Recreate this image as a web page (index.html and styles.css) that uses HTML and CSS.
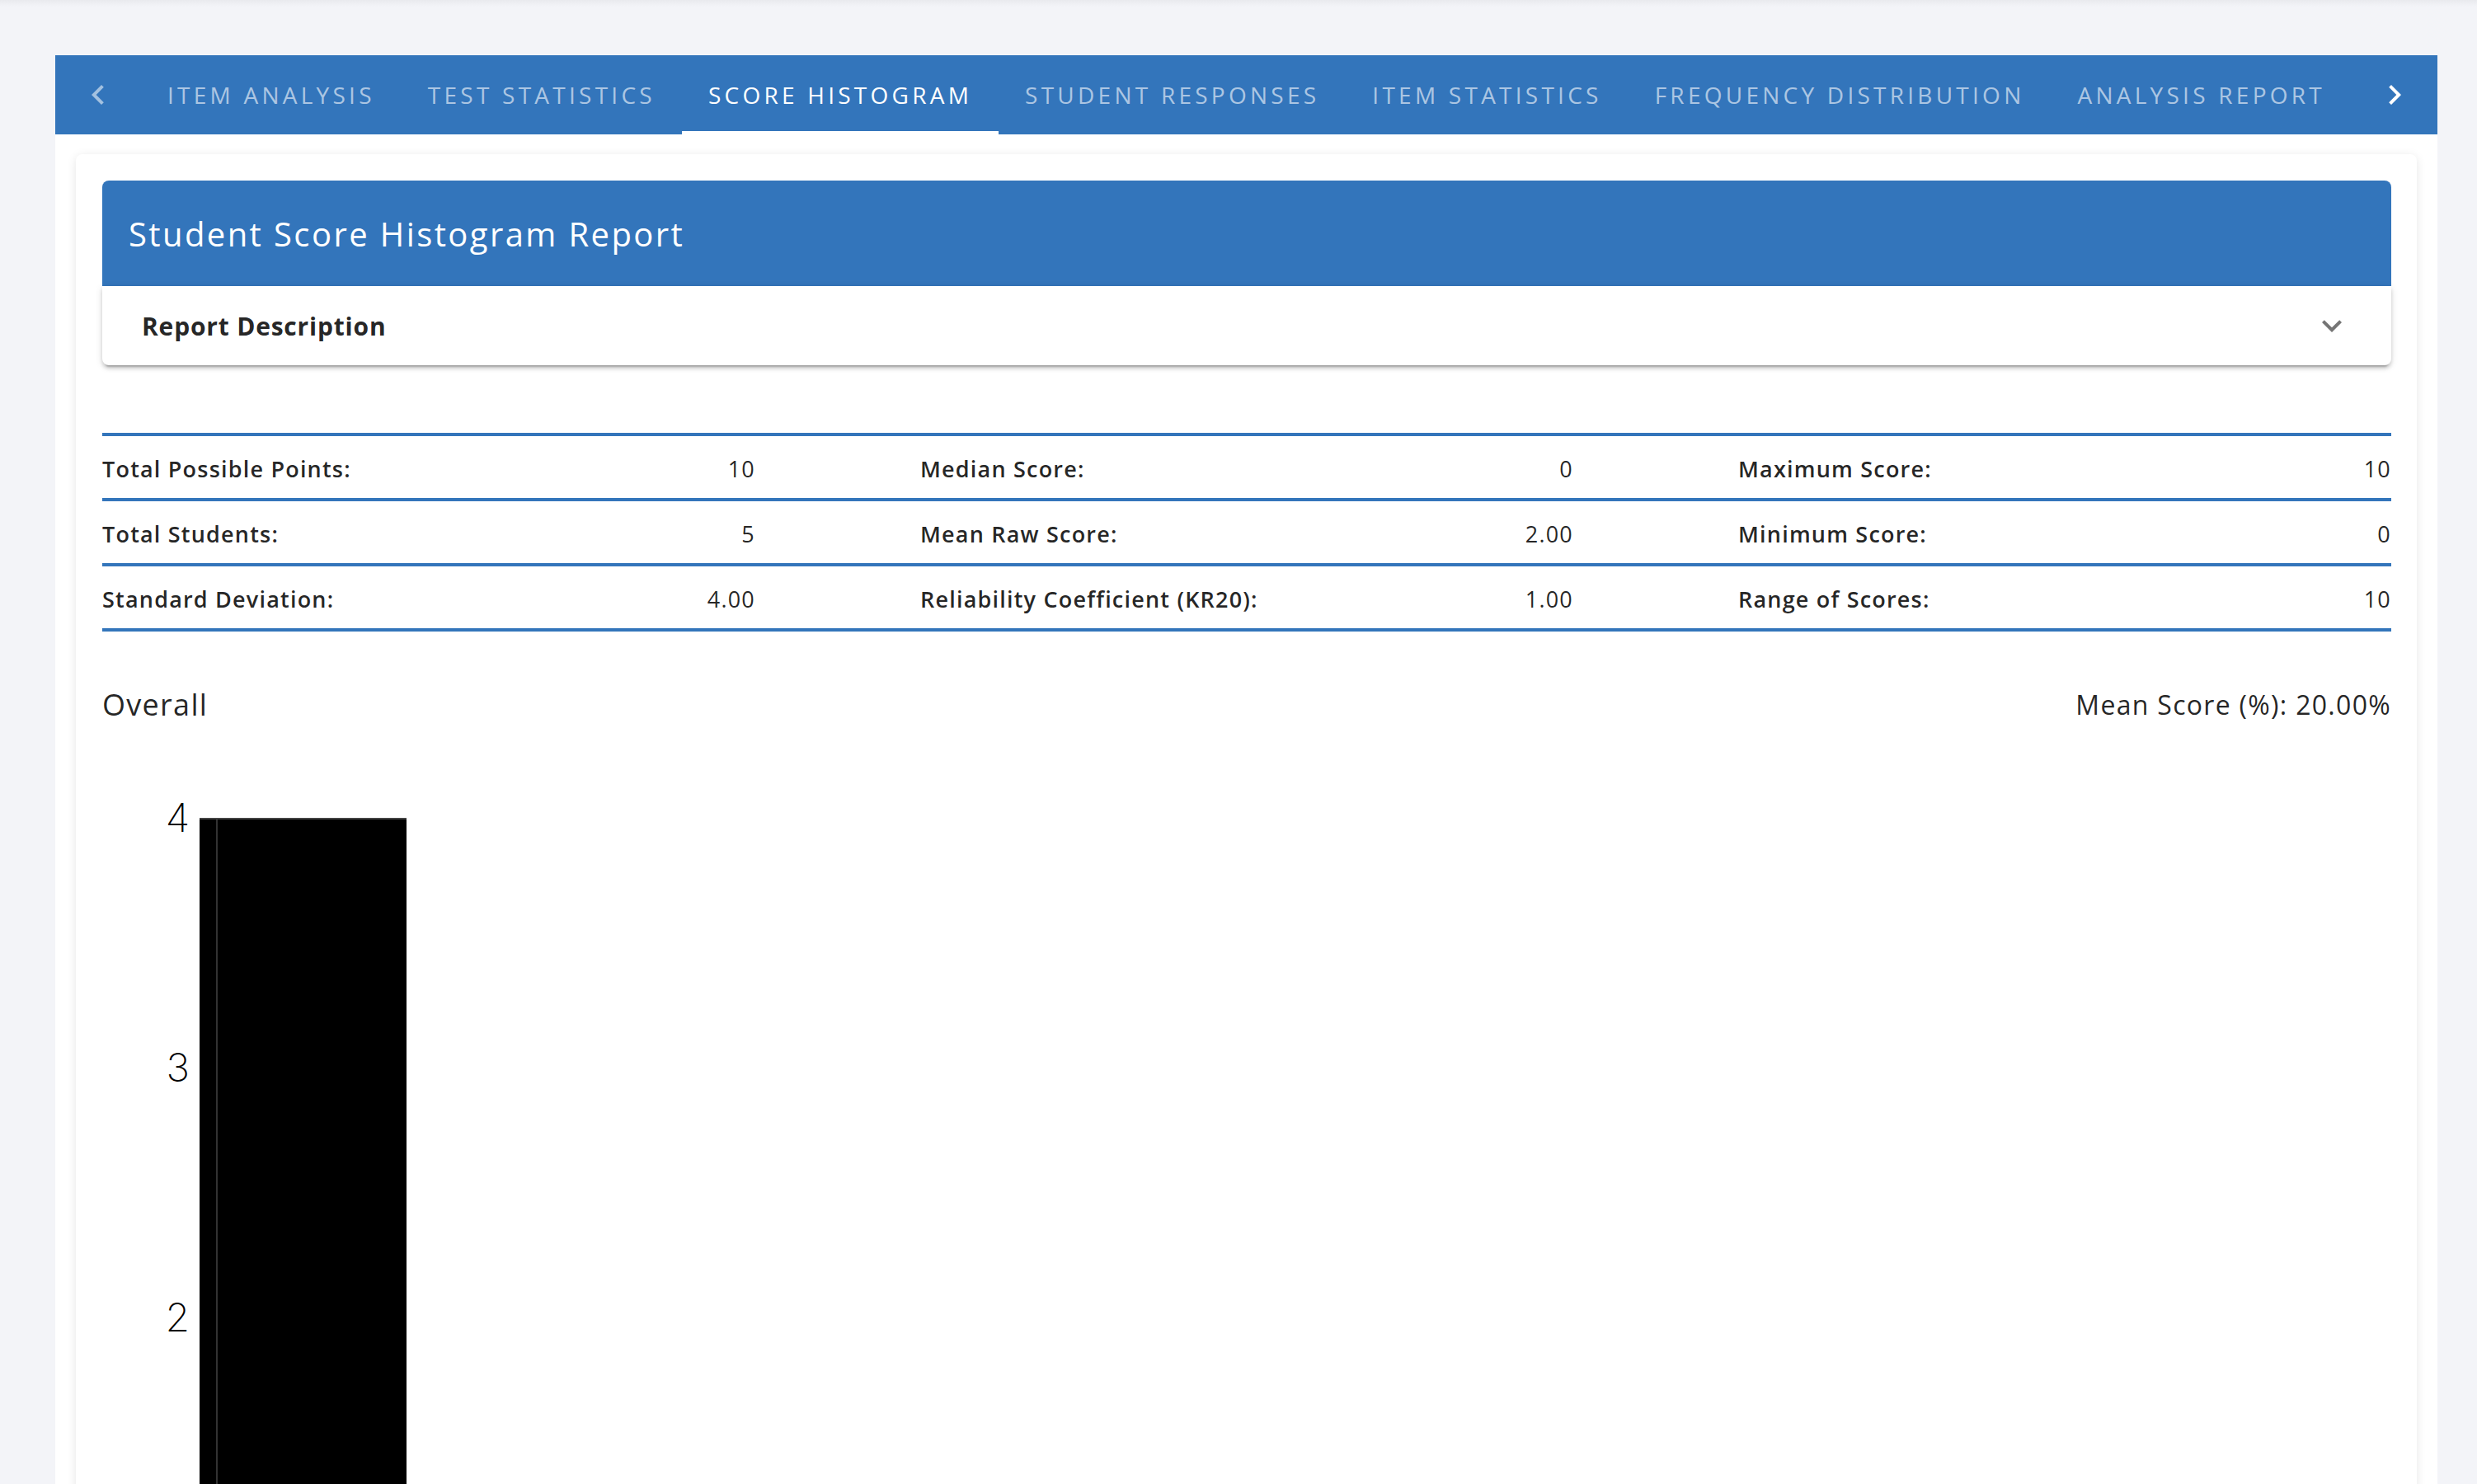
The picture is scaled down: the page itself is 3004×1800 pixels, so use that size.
FILE: index.html
```html
<!DOCTYPE html>
<html lang="en">
<head>
  <meta charset="UTF-8">
  <meta name="viewport" content="width=device-width, initial-scale=1.0">
  <title>Score Histogram</title>
  <link rel="stylesheet" href="styles.css">
</head>
<body>

<div class="top-shade"></div>

<div class="window">
  <div class="tabs">
    <div class="tabs-arrow disabled">
      <svg viewBox="0 0 24 24"><path d="M15.41,16.58L10.83,12L15.41,7.41L14,6L8,12L14,18L15.41,16.58Z"/></svg>
    </div>
    <div class="tab">Item Analysis</div>
    <div class="tab">Test Statistics</div>
    <div class="tab active">Score Histogram</div>
    <div class="tab">Student Responses</div>
    <div class="tab">Item Statistics</div>
    <div class="tab">Frequency Distribution</div>
    <div class="tab">Analysis Report</div>
    <div class="tabs-arrow">
      <svg viewBox="0 0 24 24"><path d="M8.59,16.58L13.17,12L8.59,7.41L10,6L16,12L10,18L8.59,16.58Z"/></svg>
    </div>
  </div>

  <div class="card">
    <div class="card-header">Student Score Histogram Report</div>
    <div class="panel">
      <span>Report Description</span>
      <svg class="panel-icon" viewBox="0 0 24 24"><path d="M7.41,8.58L12,13.17L16.59,8.58L18,10L12,16L6,10L7.41,8.58Z"/></svg>
    </div>

    <div class="stats">
      <div class="stats-row">
        <div class="stat"><span class="stat-label">Total Possible Points:</span><span class="stat-value">10</span></div>
        <div class="stat"><span class="stat-label">Median Score:</span><span class="stat-value">0</span></div>
        <div class="stat"><span class="stat-label">Maximum Score:</span><span class="stat-value">10</span></div>
      </div>
      <div class="stats-row">
        <div class="stat"><span class="stat-label">Total Students:</span><span class="stat-value">5</span></div>
        <div class="stat"><span class="stat-label">Mean Raw Score:</span><span class="stat-value">2.00</span></div>
        <div class="stat"><span class="stat-label">Minimum Score:</span><span class="stat-value">0</span></div>
      </div>
      <div class="stats-row">
        <div class="stat"><span class="stat-label">Standard Deviation:</span><span class="stat-value">4.00</span></div>
        <div class="stat"><span class="stat-label">Reliability Coefficient (KR20):</span><span class="stat-value">1.00</span></div>
        <div class="stat"><span class="stat-label">Range of Scores:</span><span class="stat-value">10</span></div>
      </div>
    </div>

    <div class="chart-head">
      <span class="chart-title">Overall</span>
      <span class="chart-mean">Mean Score (%): 20.00%</span>
    </div>

    <div class="chart">
      <div class="axis">
        <div class="tick">4</div>
        <div class="tick">3</div>
        <div class="tick">2</div>
      </div>
      <div class="bar"></div>
    </div>
  </div>
</div>

</body>
</html>
```

FILE: styles.css
```css
body {
  margin: 0;
  padding: 0;
  background: #f3f4f8;
  font-family: "Open Sans", "Liberation Sans", sans-serif;
  color: rgba(0, 0, 0, 0.87);
}

/* sombra de la barra superior */
.top-shade {
  height: 8px;
  background: linear-gradient(#e9eaee, #f3f4f8);
}

.window {
  margin: 59px 48px 0 67px;
  background: #fff;
  padding: 0 25px;
}

.tabs {
  display: flex;
  height: 96px;
  margin: 0 -25px 24px;
  background: #3375bb;
}

.tabs-arrow {
  width: 104px;
  flex: none;
  display: flex;
  align-items: center;
  justify-content: center;
}

.tabs-arrow svg {
  width: 48px;
  height: 48px;
  fill: #fff;
}

.tabs-arrow.disabled svg {
  fill: rgba(255, 255, 255, 0.55);
}

.tab {
  position: relative;
  display: flex;
  align-items: center;
  padding: 0 32px;
  font-size: 28px;
  font-weight: 500;
  letter-spacing: 4.25px;
  text-transform: uppercase;
  white-space: nowrap;
  color: rgba(255, 255, 255, 0.6);
}

.tab.active {
  color: #fff;
}

.tab.active::after {
  content: "";
  position: absolute;
  left: 0;
  right: 0;
  bottom: 0;
  height: 4px;
  background: #fff;
}

.card {
  padding: 32px 31px 0 32px;
  border-radius: 8px 8px 0 0;
  box-shadow: 0 2px 12px rgba(0, 0, 0, 0.1);
  height: 1640px;
}

.card-header {
  height: 128px;
  display: flex;
  align-items: center;
  padding: 0 32px;
  background: #3375bb;
  color: #fff;
  font-size: 40px;
  letter-spacing: 2.4px;
  border-radius: 8px 8px 0 0;
}

.panel {
  height: 96px;
  display: flex;
  align-items: center;
  justify-content: space-between;
  padding: 0 48px;
  font-size: 30px;
  font-weight: 700;
  letter-spacing: 0.8px;
  border-radius: 0 0 8px 8px;
  box-shadow: 0 6px 2px -4px rgba(0, 0, 0, 0.2), 0 4px 4px 0 rgba(0, 0, 0, 0.14), 0 2px 10px 0 rgba(0, 0, 0, 0.12);
}

.panel-icon {
  width: 48px;
  height: 48px;
  fill: rgba(0, 0, 0, 0.54);
}

.stats {
  margin-top: 82px;
  border-top: 4px solid #3375bb;
}

.stats-row {
  display: grid;
  grid-template-columns: 1fr 1fr 1fr;
  column-gap: 200px;
  height: 75px;
  border-bottom: 4px solid #3375bb;
}

.stat {
  display: flex;
  align-items: center;
  justify-content: space-between;
  padding-top: 4px;
  font-size: 27px;
  letter-spacing: 1.2px;
}

.stat-label {
  font-weight: 600;
}

.chart-head {
  display: flex;
  align-items: center;
  justify-content: space-between;
  height: 48px;
  margin-top: 64px;
}

.chart-title {
  font-size: 36px;
  letter-spacing: 1.3px;
}

.chart-mean {
  font-size: 32px;
  letter-spacing: 1.3px;
}

.chart {
  display: flex;
  margin-top: 114px;
}

.axis {
  width: 118px;
  padding-right: 12px;
  box-sizing: border-box;
}

.tick {
  height: 303px;
  line-height: 0;
  text-align: right;
  font-family: Inter, "DejaVu Sans", sans-serif;
  font-weight: 200;
  font-size: 48px;
  color: #000;
}

.bar {
  position: relative;
  width: 251px;
  height: 1213px;
  background: #000;
  border-top: 2px solid #444;
  box-sizing: border-box;
}

/* linea de la rejilla sobre la barra */
.bar::before {
  content: "";
  position: absolute;
  top: 0;
  bottom: 0;
  left: 20px;
  width: 2px;
  background: #333;
}
```
